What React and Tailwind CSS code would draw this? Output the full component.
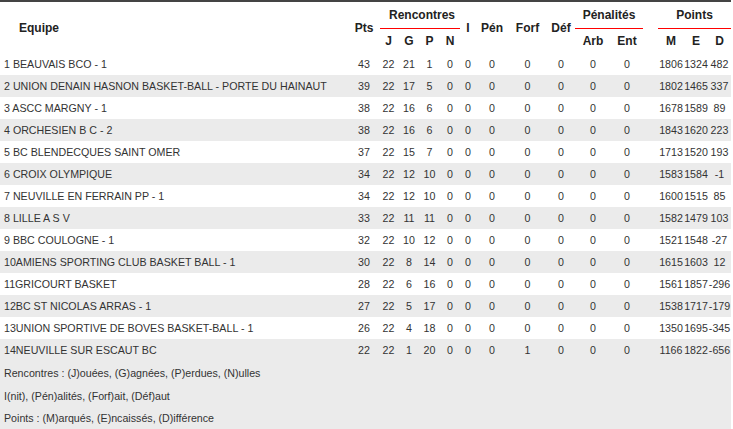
const cols =
  'grid grid-cols-[350px_28px_21px_20px_21px_20px_16px_32px_39px_28px_36px_32px_15px_26px_24px_23px]'

const rows = [
  ['1 BEAUVAIS BCO - 1', 43, 22, 21, 1, 0, 0, 0, 0, 0, 0, 0, 1806, 1324, 482],
  ['2 UNION DENAIN HASNON BASKET-BALL - PORTE DU HAINAUT', 39, 22, 17, 5, 0, 0, 0, 0, 0, 0, 0, 1802, 1465, 337],
  ['3 ASCC MARGNY - 1', 38, 22, 16, 6, 0, 0, 0, 0, 0, 0, 0, 1678, 1589, 89],
  ['4 ORCHESIEN B C - 2', 38, 22, 16, 6, 0, 0, 0, 0, 0, 0, 0, 1843, 1620, 223],
  ['5 BC BLENDECQUES SAINT OMER', 37, 22, 15, 7, 0, 0, 0, 0, 0, 0, 0, 1713, 1520, 193],
  ['6 CROIX OLYMPIQUE', 34, 22, 12, 10, 0, 0, 0, 0, 0, 0, 0, 1583, 1584, -1],
  ['7 NEUVILLE EN FERRAIN PP - 1', 34, 22, 12, 10, 0, 0, 0, 0, 0, 0, 0, 1600, 1515, 85],
  ['8 LILLE A S V', 33, 22, 11, 11, 0, 0, 0, 0, 0, 0, 0, 1582, 1479, 103],
  ['9 BBC COULOGNE - 1', 32, 22, 10, 12, 0, 0, 0, 0, 0, 0, 0, 1521, 1548, -27],
  ['10AMIENS SPORTING CLUB BASKET BALL - 1', 30, 22, 8, 14, 0, 0, 0, 0, 0, 0, 0, 1615, 1603, 12],
  ['11GRICOURT BASKET', 28, 22, 6, 16, 0, 0, 0, 0, 0, 0, 0, 1561, 1857, -296],
  ['12BC ST NICOLAS ARRAS - 1', 27, 22, 5, 17, 0, 0, 0, 0, 0, 0, 0, 1538, 1717, -179],
  ['13UNION SPORTIVE DE BOVES BASKET-BALL - 1', 26, 22, 4, 18, 0, 0, 0, 0, 0, 0, 0, 1350, 1695, -345],
  ['14NEUVILLE SUR ESCAUT BC', 22, 22, 1, 20, 0, 0, 0, 1, 0, 0, 0, 1166, 1822, -656],
]

function Head({ children, className = '' }) {
  return <div className={`flex items-center justify-center ${className}`}>{children}</div>
}

export default function App() {
  return (
    <div className="min-h-screen bg-white font-['Liberation_Sans',Arial,sans-serif] text-[#333]">
      <div className="w-[731px] border-t-2 border-[#444]">
        {/* en-tête */}
        <div className={`${cols} grid-rows-[27px_24px] text-[12px] font-bold text-[#222]`}>
          <div className="row-span-2 flex items-center pl-[19px]">Equipe</div>
          <Head className="row-span-2">Pts</Head>
          <div className="col-span-4 ml-[2px] flex items-center justify-center border-b border-[#ff0000] pb-[1px] pl-[4px]">
            Rencontres
          </div>
          <Head className="row-span-2">I</Head>
          <Head className="row-span-2">Pén</Head>
          <Head className="row-span-2">Forf</Head>
          <Head className="row-span-2">Déf</Head>
          <div className="col-span-2 flex items-center justify-center border-b border-[#ff0000] pb-[1px]">
            Pénalités
          </div>
          <div className="row-span-2" />
          <div className="col-span-3 flex items-center justify-center border-b border-[#ff0000] pb-[1px]">
            Points
          </div>
          <Head>J</Head>
          <Head>G</Head>
          <Head>P</Head>
          <Head>N</Head>
          <Head>Arb</Head>
          <Head>Ent</Head>
          <Head>M</Head>
          <Head>E</Head>
          <Head>D</Head>
        </div>

        {/* classement */}
        <div className="text-[10.67px]">
          {rows.map((r, i) => (
            <div key={i} className={`${cols} h-[22px] items-center ${i % 2 ? 'bg-[#ebebeb]' : 'bg-white'}`}>
              <div className="whitespace-nowrap pl-[4px]">{r[0]}</div>
              {r.slice(1, 12).map((v, j) => (
                <div key={j} className="text-center">{v}</div>
              ))}
              <div />
              {r.slice(12).map((v, j) => (
                <div key={j} className="text-center">{v}</div>
              ))}
            </div>
          ))}

          <div className="flex h-[68px] flex-col bg-[#ebebeb] pl-[4px]">
            <div className="flex h-[23px] items-center">Rencontres : (J)ouées, (G)agnées, (P)erdues, (N)ulles</div>
            <div className="flex h-[23px] items-center">I(nit), (Pén)alités, (Forf)ait, (Déf)aut</div>
            <div className="flex h-[22px] items-center">Points : (M)arqués, (E)ncaissés, (D)ifférence</div>
          </div>
        </div>
      </div>
    </div>
  )
}
